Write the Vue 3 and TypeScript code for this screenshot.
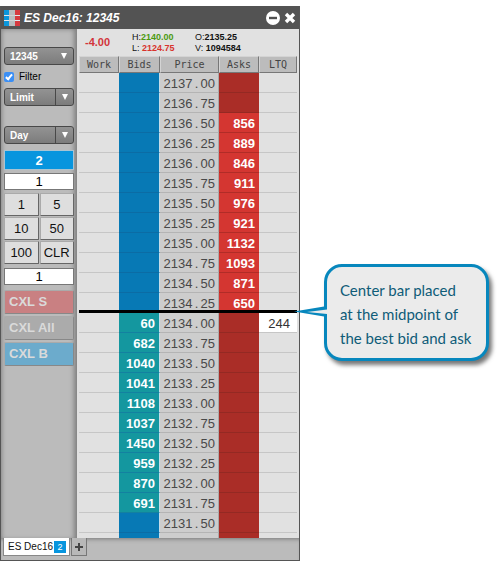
<script setup lang="ts">
import { ref } from 'vue'

interface Level {
  whole: string
  frac: string
  bid?: number
  ask?: number
  last?: number
}

const asks: Record<string, number> = {
  '2136.50': 856, '2136.25': 889, '2136.00': 846, '2135.75': 911, '2135.50': 976,
  '2135.25': 921, '2135.00': 1132, '2134.75': 1093, '2134.50': 871, '2134.25': 650,
}
const bids: Record<string, number> = {
  '2134.00': 60, '2133.75': 682, '2133.50': 1040, '2133.25': 1041, '2133.00': 1108,
  '2132.75': 1037, '2132.50': 1450, '2132.25': 959, '2132.00': 870, '2131.75': 691,
}
const bestBid = '2134'

const levels: Level[] = Array.from({ length: 23 }, (_, i) => {
  const price = (2137 - i * 0.25).toFixed(2)
  const [whole, frac] = price.split('.')
  return { whole, frac, bid: bids[price], ask: asks[price], last: price === '2134.00' ? 244 : undefined }
})

const isBestBid = (l: Level) => l.whole === bestBid && l.frac === '00'

const account = ref('12345')
const orderType = ref('Limit')
const tif = ref('Day')
const filter = ref(true)
const quantity = ref('1')
const offset = ref('1')
const keys = ['1', '5', '10', '50', '100', 'CLR']
</script>

<template>
  <main class="page">
    <section class="window">
      <header class="titlebar">
        <svg class="logo" width="16" height="16" viewBox="0 0 16 16" aria-hidden="true">
          <rect width="5" height="16" fill="#0a96dc" />
          <rect x="5" width="6" height="16" fill="#b9bcbf" />
          <rect x="11" width="5" height="16" fill="#d63a40" />
          <path d="M0 5.5H5M11 5.5H16M0 10.5H5M11 10.5H16" stroke="#dfe8ee" />
          <path d="M5 5.5H11M5 10.5H11" stroke="#cfd2d4" />
        </svg>
        <h1>ES Dec16: 12345</h1>
        <button class="icon" aria-label="Minimize">
          <svg width="14" height="14" viewBox="0 0 14 14"><circle cx="7" cy="7" r="7" fill="#fff" /><path d="M3 7H11" stroke="#505050" stroke-width="2.4" /></svg>
        </button>
        <button class="icon" aria-label="Close">
          <svg width="12" height="12" viewBox="0 0 12 12"><path d="M2 2L10 10M10 2L2 10" stroke="#fff" stroke-width="3.4" /></svg>
        </button>
      </header>

      <div class="body">
        <aside class="side">
          <div class="picker">
            <select v-model="account" aria-label="Account"><option>12345</option></select>
            <span class="arrow"></span>
          </div>
          <label class="filter"><input v-model="filter" type="checkbox" /><span>Filter</span></label>
          <div class="picker split">
            <select v-model="orderType" aria-label="Order type"><option>Limit</option></select>
            <span class="arrow"></span>
          </div>
          <div class="picker split tif">
            <select v-model="tif" aria-label="Time in force"><option>Day</option></select>
            <span class="arrow"></span>
          </div>
          <button class="position">2</button>
          <input v-model="quantity" class="qty" type="text" aria-label="Quantity" />
          <div class="keypad">
            <button v-for="k in keys" :key="k">{{ k }}</button>
          </div>
          <input v-model="offset" class="qty" type="text" aria-label="Offset" />
          <div class="cancels">
            <button class="sell">CXL S</button>
            <button class="all">CXL All</button>
            <button class="buy">CXL B</button>
          </div>
        </aside>

        <div class="market">
          <div class="stats">
            <strong class="change">-4.00</strong>
            <div class="pair"><span>H:<b class="up">2140.00</b></span><span>L: <b class="down">2124.75</b></span></div>
            <div class="pair"><span>O:<b>2135.25</b></span><span>V: <b>1094584</b></span></div>
          </div>
          <table class="ladder">
            <colgroup><col class="c-work" /><col class="c-bid" /><col class="c-price" /><col class="c-ask" /><col /></colgroup>
            <thead>
              <tr><th>Work</th><th>Bids</th><th>Price</th><th>Asks</th><th>LTQ</th></tr>
            </thead>
            <tbody>
              <tr v-for="l in levels" :key="l.whole + l.frac" :class="{ center: isBestBid(l) }">
                <td></td>
                <td class="bid" :class="{ live: l.bid }">{{ l.bid }}</td>
                <td class="price">{{ l.whole }}<span class="dot">.</span>{{ l.frac }}</td>
                <td class="ask" :class="{ live: l.ask }">{{ l.ask }}</td>
                <td class="ltq" :class="{ traded: l.last }">{{ l.last }}</td>
              </tr>
              <tr class="rest"><td></td><td class="bid"></td><td class="price"></td><td class="ask"></td><td></td></tr>
            </tbody>
          </table>
        </div>
      </div>

      <footer class="tabs">
        <button class="tab">ES Dec16<span class="badge">2</span></button>
        <button class="add" aria-label="Add tab">
          <svg width="8" height="8" viewBox="0 0 8 8"><path d="M4 0V8M0 4H8" stroke="#444" stroke-width="2" /></svg>
        </button>
      </footer>
    </section>

    <aside class="callout">
      <svg class="tail" width="34" height="12" viewBox="0 0 34 12" aria-hidden="true">
        <path d="M34 0L1 5.5L34 11Z" fill="#0787bd" />
        <path d="M34 3.5L14 6L34 8Z" fill="#ebebeb" />
      </svg>
      <p>Center bar placed<br />at the midpoint of<br />the best bid and ask</p>
    </aside>
  </main>
</template>

<style>
body {
  margin: 0;
  background: #fff;
}
</style>

<style scoped>
.page {
  display: flex;
  align-items: flex-start;
  gap: 24px;
  padding: 6px 8px 8px 0;
  font-family: "Liberation Sans", Arial, sans-serif;
}
.page *, .page *::before {
  box-sizing: border-box;
}
button, input, select {
  margin: 0;
  padding: 0;
  border: 0;
  border-radius: 0;
  font: inherit;
  color: inherit;
}
.window {
  flex: 1;
  min-width: 300px;
  border: 1px solid #555;
  border-top: 0;
  background: #bbb;
}
.titlebar {
  display: flex;
  align-items: center;
  gap: 4px;
  height: 23px;
  padding: 0 3px;
  background: #535353;
  color: #fff;
}
.titlebar h1 {
  flex: 1;
  margin: 0;
  font-size: 12px;
  font-style: italic;
  line-height: 16px;
}
.icon {
  display: flex;
  background: none;
}
.body {
  display: flex;
}
.side {
  flex: 0 0 76px;
  padding: 18px 3px 0;
  background: #bbb;
  box-shadow: inset 4px 0 4px -3px #888, inset -5px 0 5px -2px #808080, inset 0 3px 4px -2px #999;
}
.picker {
  position: relative;
  height: 18px;
}
.picker select {
  display: block;
  width: 100%;
  height: 18px;
  padding-left: 5px;
  border: 1px solid #484848;
  border-radius: 3px;
  background: linear-gradient(#939393, #7c7c7c);
  appearance: none;
  color: #fff;
  font-size: 10px;
  font-weight: bold;
}
.arrow {
  position: absolute;
  top: 1px;
  right: 1px;
  display: flex;
  align-items: center;
  justify-content: center;
  width: 18px;
  height: 16px;
  pointer-events: none;
}
.arrow::before {
  content: "";
  border: 3px solid transparent;
  border-top: 6px solid #fff;
  border-bottom: 0;
}
.split .arrow {
  border-left: 1px solid #484848;
}
.filter {
  display: flex;
  align-items: center;
  gap: 5px;
  height: 23px;
  font-size: 10px;
}
.filter input {
  display: flex;
  align-items: center;
  justify-content: center;
  width: 10px;
  height: 10px;
  border-radius: 2px;
  background: #fff;
  appearance: none;
}
.filter input:checked {
  background: #3b8ff5;
}
.filter input:checked::before {
  content: "";
  width: 4px;
  height: 7px;
  border: solid #fff;
  border-width: 0 2px 2px 0;
  transform: rotate(40deg);
}
.tif {
  margin-top: 20px;
}
.position {
  display: block;
  width: 100%;
  height: 20px;
  margin: 6px 0 3px;
  border: 1px solid #a9c4d2;
  background: #0795de;
  color: #fff;
  font-size: 13px;
  font-weight: bold;
}
.qty {
  display: block;
  width: 100%;
  height: 17px;
  border: 1px solid #777;
  background: #fff;
  text-align: center;
  font-size: 13px;
}
.keypad {
  display: grid;
  grid-template-columns: 1fr 1fr;
  gap: 1px;
  margin: 3px 0 4px;
}
.keypad button {
  height: 23px;
  border: 1px solid #666;
  border-top-color: #aaa;
  border-left-color: #aaa;
  border-radius: 1px;
  background: #dedede;
  color: #111;
  font-size: 13px;
}
.cancels {
  display: grid;
  gap: 2px;
  margin-top: 5px;
}
.cancels button {
  height: 24px;
  padding: 0 0 2px 4px;
  border: 1px solid #aaa;
  border-right-color: #888;
  border-bottom-color: #888;
  border-radius: 2px;
  color: #dadada;
  font-size: 13px;
  font-weight: bold;
  text-align: left;
}
.cancels .sell {
  background: #c98082;
}
.cancels .all {
  background: #ababab;
}
.cancels .buy {
  background: #6cabcc;
}
.market {
  flex: 1;
  padding: 0 2px;
  background: #e1e1e1;
}
.stats {
  display: flex;
  align-items: center;
  height: 27px;
  padding-left: 6px;
  font-size: 9px;
  line-height: 11px;
}
.change {
  width: 47px;
  color: #d2343a;
  font-size: 11px;
}
.pair {
  display: flex;
  flex-direction: column;
  width: 63px;
  color: #111;
}
.up {
  color: #4c9a10;
}
.down {
  color: #d8332c;
}
.ladder {
  width: 100%;
  border-spacing: 0;
  table-layout: fixed;
  font-size: 13px;
}
.c-work, .c-ask {
  width: 40px;
}
.c-bid {
  width: 41px;
}
.c-price {
  width: 59px;
}
.ladder th {
  height: 17px;
  padding: 0;
  border: 1px solid #d4d4d4;
  border-right-color: #777;
  border-bottom-color: #777;
  background: #bcbcbc;
  color: #444;
  font: 10px/14px "DejaVu Sans Mono", monospace;
  text-align: center;
}
.ladder td {
  height: 20px;
  padding: 2px 4px 0 0;
  border-bottom: 1px solid #c6c6c6;
  line-height: 17px;
  text-align: right;
}
.ladder .bid {
  border-color: #0b6ca5;
  border-right: 1px solid #c6dce8;
  background: #0779b5;
  color: #fff;
  font-weight: bold;
}
.ladder .bid.live {
  border-bottom-color: #1381a0;
  background: #14979f;
}
.ladder .price {
  padding-right: 3px;
  border-right: 1px solid #a9a9a9;
  border-bottom-color: #b4b4b4;
  background: #cdcdcd;
  color: #484848;
}
.dot {
  display: inline-block;
  width: 8px;
  text-align: center;
}
.ladder .ask {
  border-bottom-color: #942923;
  background: #aa2d27;
  color: #fff;
  font-weight: bold;
}
.ladder .ask.live {
  border-bottom-color: #b12c27;
  background: #d43631;
}
.ladder .ltq {
  padding-right: 7px;
  color: #333;
}
.ladder .traded {
  background: #fff;
}
.center {
  position: relative;
}
.center td:first-child::before {
  content: "";
  position: absolute;
  top: -3px;
  left: 0;
  right: 0;
  height: 3px;
  background: #000;
}
.ladder .rest td {
  height: 5px;
  padding: 0;
  border-bottom: 0;
}
.tabs {
  display: flex;
  gap: 1px;
  height: 22px;
  padding: 0 2px 4px;
  box-shadow: inset 0 4px 4px -3px #777;
}
.tab {
  display: flex;
  align-items: center;
  gap: 1px;
  padding: 0 3px 0 4px;
  border: 1px solid #888;
  border-top: 0;
  background: #fff;
  color: #111;
  font-size: 10px;
}
.badge {
  width: 12px;
  height: 12px;
  background: #0795de;
  color: #fff;
  font-size: 9px;
  line-height: 12px;
}
.add {
  display: flex;
  align-items: center;
  justify-content: center;
  width: 16px;
  border: 1px solid #777;
  border-top: 0;
  background: #b8b8b8;
}
.callout {
  position: relative;
  flex: 0 0 165px;
  margin-top: 258px;
  padding: 11px 0 8px 13px;
  border: 3px solid #0787bd;
  border-radius: 18px;
  background: #ebebeb;
  box-shadow: 3px 4px 4px #777;
}
.callout p {
  margin: 0;
  color: #0f5c78;
  font: 15px/24px Lato, sans-serif;
  white-space: nowrap;
}
.tail {
  position: absolute;
  top: 39px;
  left: -34px;
}
</style>
